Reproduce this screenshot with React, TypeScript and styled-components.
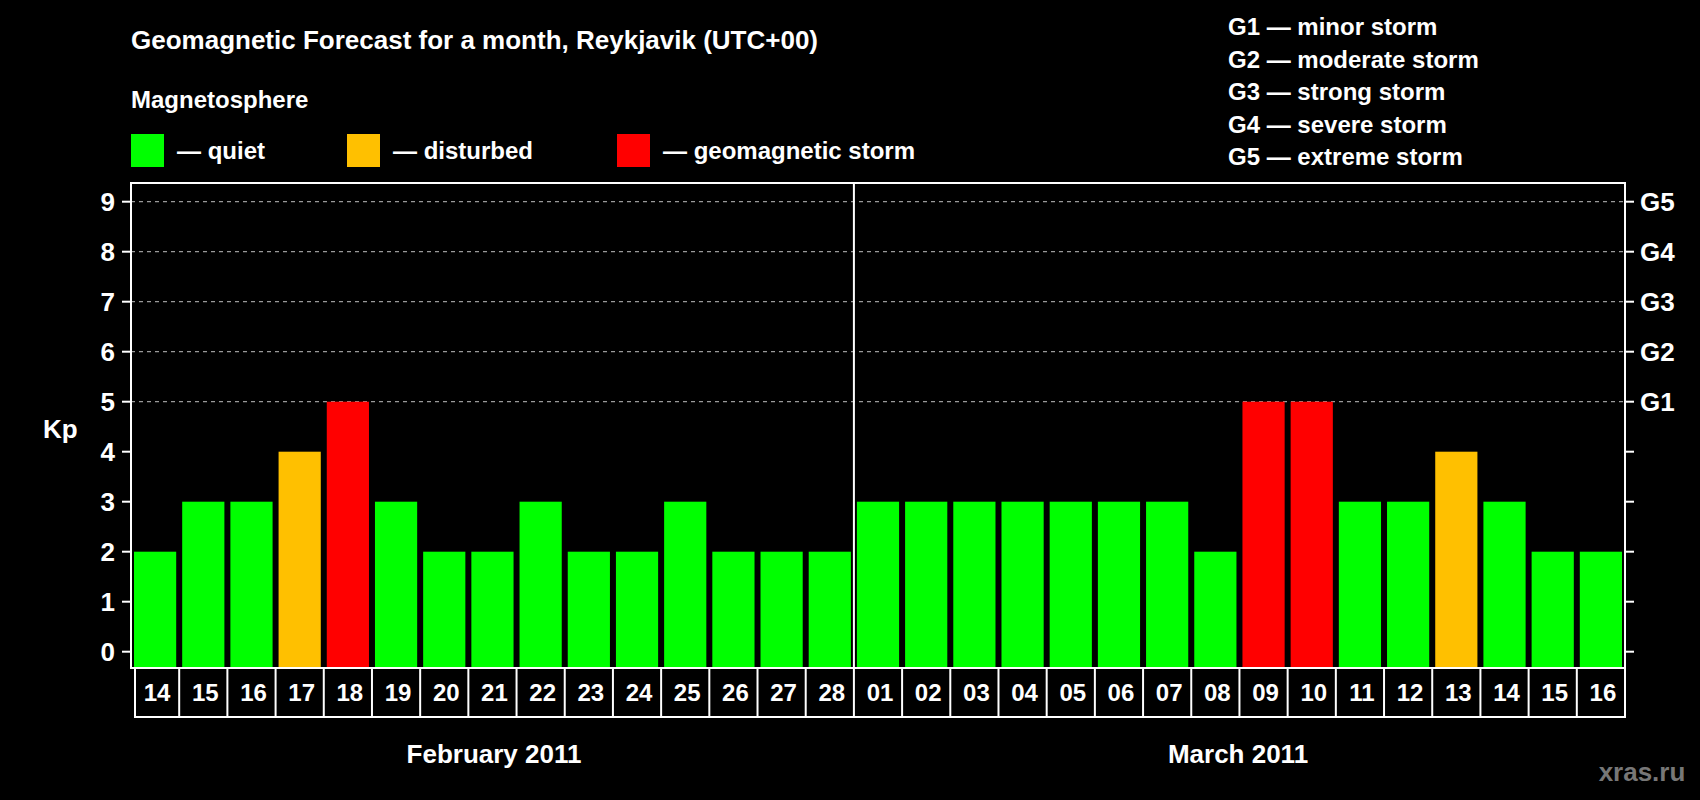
import React from "react";
import styled, { createGlobalStyle } from "styled-components";

const Global = createGlobalStyle`
  html, body { margin: 0; background: #000; }
  body { font-family: "Liberation Sans", Arial, sans-serif; }
`;

const Page = styled.div`
  width: 1700px; height: 800px; background: #000; color: #fff;
  display: flex; flex-direction: column; overflow: hidden;
`;
const Header = styled.div`
  height: 180px; display: flex; justify-content: space-between;
`;
const LeftHead = styled.div`
  padding-left: 131px; padding-top: 24px; display: flex; flex-direction: column;
`;
const Title = styled.div`
  font-size: 26px; font-weight: bold; line-height: 32px;
`;
const Sub = styled.div`
  font-size: 24px; font-weight: bold; line-height: 30px; margin-top: 29px;
`;
const Legend = styled.div`
  display: flex; align-items: center; margin-top: 19px;
`;
const LegendItem = styled.div<{ $w: number }>`
  display: flex; align-items: center; width: ${p => p.$w}px;
  font-size: 24px; font-weight: bold;
`;
const Swatch = styled.span<{ $c: string }>`
  width: 33px; height: 33px; background: ${p => p.$c}; margin-right: 13px; flex: none;
`;
const RightHead = styled.div`
  width: 472px; padding-top: 11px; display: flex; flex-direction: column;
`;
const GLine = styled.div`
  font-size: 24px; font-weight: bold; line-height: 32.5px;
`;

const feb = [2,3,3,4,5,3,2,2,3,2,2,3,2,2,2];
const mar = [3,3,3,3,3,3,3,2,5,5,3,3,4,3,2,2];
const days = [
  ...feb.map((v, i) => ({ d: String(14 + i), v })),
  ...mar.map((v, i) => ({ d: String(i + 1).padStart(2, "0"), v })),
];
const col = (v: number) => (v >= 5 ? "#ff0000" : v === 4 ? "#ffc000" : "#00ff00");

const L = 131, R = 1625, T = 3, B = 488, Y0 = 471.7, U = 50;
const W = (R - L) / days.length;

function Chart() {
  const ky = (k: number) => Y0 - k * U;
  return (
    <svg width="1700" height="620" style={{ display: "block" }} fontFamily="Liberation Sans, Arial, sans-serif" fontWeight="bold">
      {[5,6,7,8,9].map(k => (
        <line key={k} x1={L} x2={R} y1={ky(k)} y2={ky(k)} stroke="#999" strokeWidth="1.3" strokeDasharray="4 4" />
      ))}
      {days.map((d, i) => (
        <rect key={i} x={L + i * W + 3} y={ky(d.v)} width={W - 6} height={B - ky(d.v)} fill={col(d.v)} />
      ))}
      <line x1={L + 15 * W} x2={L + 15 * W} y1={T} y2={B} stroke="#fff" strokeWidth="2" />
      <rect x={L} y={T} width={R - L} height={B - T} fill="none" stroke="#fff" strokeWidth="2" />
      {Array.from({ length: 10 }, (_, k) => (
        <g key={k}>
          <line x1={L - 9} x2={L} y1={ky(k)} y2={ky(k)} stroke="#fff" strokeWidth="2" />
          <line x1={R} x2={R + 9} y1={ky(k)} y2={ky(k)} stroke="#fff" strokeWidth="2" />
          <text x={115} y={ky(k) + 9} fontSize="26" fill="#fff" textAnchor="end">{k}</text>
          {k >= 5 && <text x={1640} y={ky(k) + 9} fontSize="26" fill="#fff">G{k - 4}</text>}
        </g>
      ))}
      <text x={43} y={258} fontSize="26" fill="#fff">Kp</text>
      <rect x={L + 4} y={B} width={R - L - 4} height={49} fill="none" stroke="#fff" strokeWidth="2" />
      {days.map((d, i) => (
        <g key={i}>
          {i > 0 && <line x1={L + i * W} x2={L + i * W} y1={B} y2={B + 49} stroke="#fff" strokeWidth="2" />}
          <text x={L + i * W + W / 2 + 2} y={B + 33} fontSize="24" fill="#fff" textAnchor="middle">{d.d}</text>
        </g>
      ))}
      <text x={494} y={583} fontSize="26" fill="#fff" textAnchor="middle">February 2011</text>
      <text x={1238} y={583} fontSize="26" fill="#fff" textAnchor="middle">March 2011</text>
      <text x={1642} y={601} fontSize="26" fill="#777" textAnchor="middle">xras.ru</text>
    </svg>
  );
}

export default function App() {
  return (
    <Page>
      <Global />
      <Header>
        <LeftHead>
          <Title>Geomagnetic Forecast for a month, Reykjavik (UTC+00)</Title>
          <Sub>Magnetosphere</Sub>
          <Legend>
            <LegendItem $w={216}><Swatch $c="#00ff00" />— quiet</LegendItem>
            <LegendItem $w={270}><Swatch $c="#ffc000" />— disturbed</LegendItem>
            <LegendItem $w={400}><Swatch $c="#ff0000" />— geomagnetic storm</LegendItem>
          </Legend>
        </LeftHead>
        <RightHead>
          <GLine>G1 — minor storm</GLine>
          <GLine>G2 — moderate storm</GLine>
          <GLine>G3 — strong storm</GLine>
          <GLine>G4 — severe storm</GLine>
          <GLine>G5 — extreme storm</GLine>
        </RightHead>
      </Header>
      <Chart />
    </Page>
  );
}
